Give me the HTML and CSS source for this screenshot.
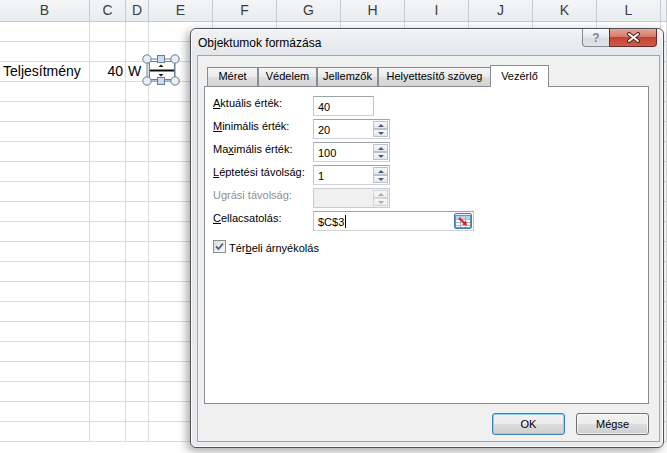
FILE: index.html
```html
<!DOCTYPE html>
<html lang="hu">
<head>
<meta charset="utf-8">
<title>Objektumok formázása</title>
<link rel="stylesheet" href="styles.css">
</head>
<body>
<div class="sheet">
  <div class="row head"><b>B</b><b>C</b><b>D</b><b>E</b><b>F</b><b>G</b><b>H</b><b>I</b><b>J</b><b>K</b><b>L</b><b></b></div>
  <div class="row"><i></i><i></i><i></i><i></i><i></i><i></i><i></i><i></i><i></i><i></i><i></i><i></i></div>
  <div class="row"><i></i><i></i><i></i><i></i><i></i><i></i><i></i><i></i><i></i><i></i><i></i><i></i></div>
  <div class="row"><i class="txt">Teljesítmény</i><i class="num">40</i><i class="unit">W</i><i></i><i></i><i></i><i></i><i></i><i></i><i></i><i></i><i></i></div>
  <div class="row"><i></i><i></i><i></i><i></i><i></i><i></i><i></i><i></i><i></i><i></i><i></i><i></i></div>
  <div class="row"><i></i><i></i><i></i><i></i><i></i><i></i><i></i><i></i><i></i><i></i><i></i><i></i></div>
  <div class="row"><i></i><i></i><i></i><i></i><i></i><i></i><i></i><i></i><i></i><i></i><i></i><i></i></div>
  <div class="row"><i></i><i></i><i></i><i></i><i></i><i></i><i></i><i></i><i></i><i></i><i></i><i></i></div>
  <div class="row"><i></i><i></i><i></i><i></i><i></i><i></i><i></i><i></i><i></i><i></i><i></i><i></i></div>
  <div class="row"><i></i><i></i><i></i><i></i><i></i><i></i><i></i><i></i><i></i><i></i><i></i><i></i></div>
  <div class="row"><i></i><i></i><i></i><i></i><i></i><i></i><i></i><i></i><i></i><i></i><i></i><i></i></div>
  <div class="row"><i></i><i></i><i></i><i></i><i></i><i></i><i></i><i></i><i></i><i></i><i></i><i></i></div>
  <div class="row"><i></i><i></i><i></i><i></i><i></i><i></i><i></i><i></i><i></i><i></i><i></i><i></i></div>
  <div class="row"><i></i><i></i><i></i><i></i><i></i><i></i><i></i><i></i><i></i><i></i><i></i><i></i></div>
  <div class="row"><i></i><i></i><i></i><i></i><i></i><i></i><i></i><i></i><i></i><i></i><i></i><i></i></div>
  <div class="row"><i></i><i></i><i></i><i></i><i></i><i></i><i></i><i></i><i></i><i></i><i></i><i></i></div>
  <div class="row"><i></i><i></i><i></i><i></i><i></i><i></i><i></i><i></i><i></i><i></i><i></i><i></i></div>
  <div class="row"><i></i><i></i><i></i><i></i><i></i><i></i><i></i><i></i><i></i><i></i><i></i><i></i></div>
  <div class="row"><i></i><i></i><i></i><i></i><i></i><i></i><i></i><i></i><i></i><i></i><i></i><i></i></div>
  <div class="row"><i></i><i></i><i></i><i></i><i></i><i></i><i></i><i></i><i></i><i></i><i></i><i></i></div>
  <div class="row"><i></i><i></i><i></i><i></i><i></i><i></i><i></i><i></i><i></i><i></i><i></i><i></i></div>
  <div class="row"><i></i><i></i><i></i><i></i><i></i><i></i><i></i><i></i><i></i><i></i><i></i><i></i></div>
</div>

<svg class="spinctl" width="40" height="34" viewBox="0 0 40 34">
  <rect x="8.5" y="8.5" width="25" height="18" fill="#fff" stroke="#6b7d92"/>
  <line x1="9" y1="17.5" x2="33" y2="17.5" stroke="#111" stroke-width="2"/>
  <polygon points="17.5,14 22.5,14 20,11.5" fill="#111"/>
  <polygon points="17.5,21 22.5,21 20,23.5" fill="#111"/>
  <line x1="6" y1="6" x2="34" y2="6" stroke="#6b7d92"/>
  <line x1="6" y1="28" x2="34" y2="28" stroke="#6b7d92"/>
  <line x1="6" y1="6" x2="6" y2="28" stroke="#6b7d92"/>
  <line x1="34" y1="6" x2="34" y2="28" stroke="#6b7d92"/>
  <circle cx="6" cy="6" r="4.2" fill="#e6eef7" stroke="#6b7d92"/>
  <circle cx="34" cy="6" r="4.2" fill="#e6eef7" stroke="#6b7d92"/>
  <circle cx="6" cy="28" r="4.2" fill="#e6eef7" stroke="#6b7d92"/>
  <circle cx="34" cy="28" r="4.2" fill="#e6eef7" stroke="#6b7d92"/>
  <rect x="16.5" y="2.5" width="7" height="7" fill="#c9dcf2" stroke="#6b7d92"/>
  <rect x="16.5" y="24.5" width="7" height="7" fill="#c9dcf2" stroke="#6b7d92"/>
</svg>

<div class="dialog">
  <div class="titlebar">
    <span class="title">Objektumok formázása</span>
    <div class="caps">
      <span class="cap help">?</span>
      <span class="cap close">
        <svg width="15" height="11" viewBox="0 0 15 11">
          <path d="M3 2 L12 9 M12 2 L3 9" stroke="#4a1e1a" stroke-width="4" stroke-linecap="round"/>
          <path d="M3 2 L12 9 M12 2 L3 9" stroke="#fff" stroke-width="2" stroke-linecap="round"/>
        </svg>
      </span>
    </div>
  </div>
  <div class="client">
    <div class="tabs">
      <span class="tab t1">Méret</span>
      <span class="tab t2">Védelem</span>
      <span class="tab t3">Jellemzők</span>
      <span class="tab t4">Helyettesítő szöveg</span>
      <span class="tab active">Vezérlő</span>
    </div>
    <div class="panel">
      <div class="frow">
        <span class="lbl"><u>A</u>ktuális érték:</span>
        <span class="box short"><span class="val">40</span></span>
      </div>
      <div class="frow">
        <span class="lbl"><u>M</u>inimális érték:</span>
        <span class="box"><span class="val">20</span><span class="spin"><i class="up"></i><i class="dn"></i></span></span>
      </div>
      <div class="frow">
        <span class="lbl">Ma<u>x</u>imális érték:</span>
        <span class="box"><span class="val">100</span><span class="spin"><i class="up"></i><i class="dn"></i></span></span>
      </div>
      <div class="frow">
        <span class="lbl"><u>L</u>éptetési távolság:</span>
        <span class="box"><span class="val">1</span><span class="spin"><i class="up"></i><i class="dn"></i></span></span>
      </div>
      <div class="frow disabled">
        <span class="lbl">Ugrási távolság:</span>
        <span class="box"><span class="val"></span><span class="spin"><i class="up"></i><i class="dn"></i></span></span>
      </div>
      <div class="frow">
        <span class="lbl"><u>C</u>ellacsatolás:</span>
        <span class="box link"><span class="val">$C$3<span class="caret"></span></span>
          <span class="pick">
            <svg width="16" height="13" viewBox="0 0 16 13">
              <rect x="0.5" y="0.5" width="15" height="12" fill="#fff" stroke="#6f8fbd"/>
              <rect x="1" y="1" width="14" height="3" fill="#bcd2ee"/>
              <path d="M1 4.5 H15 M1 7.5 H15 M1 10.5 H15 M5.5 1 V12 M10.5 1 V12" stroke="#9fb6d6" stroke-width="1"/>
              <path d="M4 3 L10 8.5" stroke="#d8261c" stroke-width="2"/>
              <polygon points="7,9.5 12,10.5 11,5.5" fill="#d8261c"/>
            </svg>
          </span>
        </span>
      </div>
      <div class="crow">
        <span class="chk">
          <svg width="9" height="9" viewBox="0 0 9 9"><path d="M1 4.5 L3.5 7 L8 1.5" fill="none" stroke="#4a5f8f" stroke-width="1.8"/></svg>
        </span>
        <span class="clbl">Tér<u>b</u>eli árnyékolás</span>
      </div>
    </div>
    <div class="btns">
      <span class="btn default">OK</span>
      <span class="btn">Mégse</span>
    </div>
  </div>
</div>
</body>
</html>
```

FILE: styles.css
```css
* { box-sizing: border-box; }
html, body { margin: 0; padding: 0; }
body {
  width: 667px;
  height: 453px;
  overflow: hidden;
  position: relative;
  background: #fff;
  font-family: "Liberation Sans", Arial, sans-serif;
}

/* spreadsheet */
.sheet { display: flex; flex-direction: column; }
.row {
  display: grid;
  grid-template-columns: 90px 36px 23px repeat(8, 64px) 1fr;
  height: 20px;
  flex: none;
}
.row > i, .row > b {
  display: block;
  border-right: 1px solid #dadcdd;
  border-bottom: 1px solid #dadcdd;
  font-style: normal;
  font-weight: normal;
  font-size: 14px;
  line-height: 19px;
  white-space: nowrap;
  overflow: hidden;
  color: #000;
}
.row.head { height: 22px; background: linear-gradient(#f4f5f7, #e9ecef); }
.row.head > b {
  border-color: #c7cbd0;
  text-align: center;
  font-size: 14px;
  line-height: 21px;
  color: #3d3d3d;
}
.row > .txt { padding-left: 3px; }
.row > .num { text-align: right; padding-right: 2px; }
.row > .unit { padding-left: 2px; }

.spinctl { position: absolute; left: 141px; top: 53px; }

/* dialog */
.dialog {
  position: absolute;
  left: 190px;
  top: 28px;
  width: 474px;
  height: 420px;
  border: 1px solid #50545a;
  border-radius: 6px;
  background: linear-gradient(#f1f3f5, #e5e8eb 26px, #e8eaed);
  box-shadow: -3px 3px 10px rgba(0, 0, 0, 0.35), inset 0 0 0 1px rgba(255, 255, 255, 0.8);
  padding: 0 3px 5px 6px;
  display: flex;
  flex-direction: column;
  font-size: 11px;
  color: #000;
}
.titlebar { height: 26px; display: flex; align-items: flex-start; flex: none; }
.title { flex: 1; font-size: 12px; line-height: 14px; padding: 7px 0 0 1px; }
.caps { display: flex; margin-right: 3px; }
.cap {
  height: 18px;
  display: flex;
  align-items: center;
  justify-content: center;
  border-top: none;
}
.help {
  width: 27px;
  border: 1px solid #858a91;
  border-top: none;
  border-right: none;
  border-radius: 0 0 0 4px;
  background: linear-gradient(#fbfbfc, #e6e8eb 50%, #d8dce0 51%, #e2e5e8);
  color: #7b8087;
  font-size: 12px;
  font-weight: bold;
  text-shadow: 0 0 1px #fff;
}
.close {
  width: 48px;
  border: 1px solid #6a2b26;
  border-top: none;
  border-radius: 0 0 4px 0;
  background: linear-gradient(#e6a69b, #d77b6c 45%, #c24330 50%, #cf5b48);
}

.client {
  flex: none;
  height: 387px;
  border: 1px solid #a2a6ac;
  background: #f0f0f0;
  padding: 9px 10px 6px 6px;
  display: flex;
  flex-direction: column;
}
.tabs { display: flex; align-items: flex-end; height: 21px; padding-left: 3px; flex: none; }
.tab {
  height: 19px;
  border: 1px solid #898c95;
  border-bottom: none;
  background: linear-gradient(#f5f5f5, #ebebeb 50%, #dedede 51%, #d3d3d3);
  text-align: center;
  line-height: 17px;
  white-space: nowrap;
}
.t1 { width: 51px; }
.t2 { width: 59px; }
.t3 { width: 61px; }
.t4 { width: 113px; }
.tab.active {
  width: 59px;
  height: 22px;
  margin-left: -1px;
  margin-bottom: -1px;
  background: #fff;
  padding-top: 2px;
  position: relative;
  z-index: 1;
}
.panel {
  height: 318px;
  flex: none;
  border: 1px solid #898c95;
  background: #fff;
  padding: 9px 0 0 8px;
}
.frow { display: flex; height: 20px; margin-bottom: 3px; }
.lbl { width: 100px; line-height: 14px; white-space: nowrap; }
.box {
  width: 77px;
  height: 20px;
  display: flex;
  border: 1px solid #abadb3;
  border-color: #9ea3aa #c2c6cc #cfd3d8 #c2c6cc;
  background: #fff;
}
.box.short { width: 61px; }
.val { flex: 1; padding: 2px 0 0 4px; line-height: 16px; white-space: nowrap; }
.spin { width: 16px; display: flex; flex-direction: column; padding: 1px 1px 1px 0; }
.spin i {
  flex: 1;
  display: flex;
  align-items: center;
  justify-content: center;
  border: 1px solid #b9c2ce;
  background: linear-gradient(#f7f9fb, #e3e8ee);
}
.spin i::after {
  content: "";
  width: 0;
  height: 0;
  border-left: 3px solid transparent;
  border-right: 3px solid transparent;
}
.spin .up::after { border-bottom: 3px solid #4c5b73; }
.spin .dn::after { border-top: 3px solid #4c5b73; }
.disabled .lbl { color: #8d8d8d; }
.disabled .box { background: #f0f0f0; border-color: #c9cbce; }
.disabled .spin i { border-color: #d2d5d9; background: linear-gradient(#f8f8f8, #ececec); }
.disabled .spin .up::after { border-bottom-color: #a8acb2; }
.disabled .spin .dn::after { border-top-color: #a8acb2; }
.box.link { width: 161px; }
.caret { display: inline-block; width: 1px; height: 13px; background: #000; vertical-align: -2px; margin-left: 1px; }
.pick {
  width: 18px;
  margin: 1px 1px 1px 0;
  display: flex;
  align-items: center;
  justify-content: center;
  border: 1px solid #3c7fb1;
  background: linear-gradient(#eaf4fc, #c8e1f6);
  border-radius: 2px;
}
.crow { display: flex; align-items: center; margin-top: 9px; height: 13px; }
.chk {
  width: 13px;
  height: 13px;
  border: 1px solid #8e8f8f;
  background: linear-gradient(135deg, #dcdcdc, #fafafa);
  display: flex;
  align-items: center;
  justify-content: center;
  margin-right: 3px;
}
.clbl { line-height: 14px; padding-top: 2px; }

.btns { display: flex; justify-content: flex-end; gap: 11px; margin-top: 9px; flex: none; }
.btn {
  width: 73px;
  height: 22px;
  border: 1px solid #707070;
  border-radius: 3px;
  background: linear-gradient(#f2f2f2, #ebebeb 50%, #dddddd 51%, #cfcfcf);
  text-align: center;
  line-height: 20px;
  box-shadow: inset 0 0 0 1px rgba(255, 255, 255, 0.7);
}
.btn.default {
  border-color: #3c7fb1;
  box-shadow: inset 0 0 0 1px #8fd0f3;
}
```
